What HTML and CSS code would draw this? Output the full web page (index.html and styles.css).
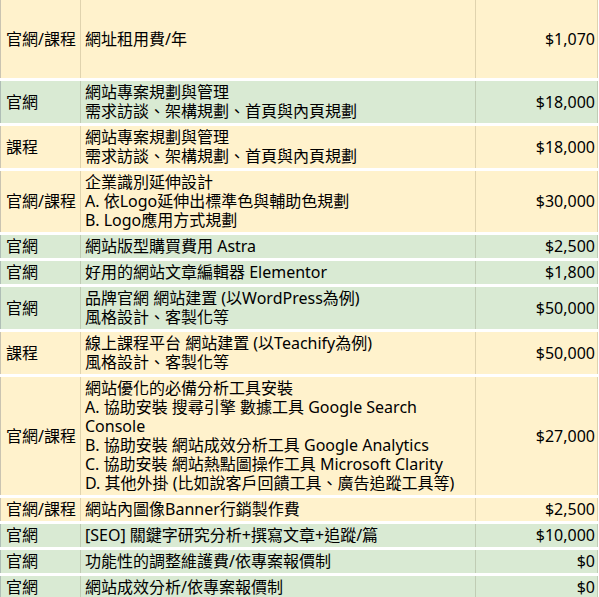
FILE: index.html
```html
<!DOCTYPE html>
<html lang="zh-Hant">
<head>
<meta charset="utf-8">
<title>報價表</title>
<link rel="stylesheet" href="styles.css">
</head>
<body>
<div class="sheet">
  <div class="row yellow tall">
    <div class="cell type">官網/課程</div>
    <div class="cell item"><p class="text">網址租用費/年</p></div>
    <div class="cell price">$1,070</div>
  </div>
  <div class="row green">
    <div class="cell type">官網</div>
    <div class="cell item"><p class="text">網站專案規劃與管理<br>需求訪談、架構規劃、首頁與內頁規劃</p></div>
    <div class="cell price">$18,000</div>
  </div>
  <div class="row yellow">
    <div class="cell type">課程</div>
    <div class="cell item"><p class="text">網站專案規劃與管理<br>需求訪談、架構規劃、首頁與內頁規劃</p></div>
    <div class="cell price">$18,000</div>
  </div>
  <div class="row yellow">
    <div class="cell type">官網/課程</div>
    <div class="cell item"><p class="text">企業識別延伸設計<br>A. 依Logo延伸出標準色與輔助色規劃<br>B. Logo應用方式規劃</p></div>
    <div class="cell price">$30,000</div>
  </div>
  <div class="row green">
    <div class="cell type">官網</div>
    <div class="cell item"><p class="text">網站版型購買費用 Astra</p></div>
    <div class="cell price">$2,500</div>
  </div>
  <div class="row green">
    <div class="cell type">官網</div>
    <div class="cell item"><p class="text">好用的網站文章編輯器 Elementor</p></div>
    <div class="cell price">$1,800</div>
  </div>
  <div class="row green">
    <div class="cell type">官網</div>
    <div class="cell item"><p class="text">品牌官網 網站建置 (以WordPress為例)<br>風格設計、客製化等</p></div>
    <div class="cell price">$50,000</div>
  </div>
  <div class="row yellow">
    <div class="cell type">課程</div>
    <div class="cell item"><p class="text">線上課程平台 網站建置 (以Teachify為例)<br>風格設計、客製化等</p></div>
    <div class="cell price">$50,000</div>
  </div>
  <div class="row yellow">
    <div class="cell type">官網/課程</div>
    <div class="cell item"><p class="text">網站優化的必備分析工具安裝<br>A. 協助安裝 搜尋引擎 數據工具 Google Search<br>Console<br>B. 協助安裝 網站成效分析工具 Google Analytics<br>C. 協助安裝 網站熱點圖操作工具 Microsoft Clarity<br>D. 其他外掛 (比如說客戶回饋工具、廣告追蹤工具等)</p></div>
    <div class="cell price">$27,000</div>
  </div>
  <div class="row yellow">
    <div class="cell type">官網/課程</div>
    <div class="cell item"><p class="text">網站內圖像Banner行銷製作費</p></div>
    <div class="cell price">$2,500</div>
  </div>
  <div class="row green">
    <div class="cell type">官網</div>
    <div class="cell item"><p class="text">[SEO] 關鍵字研究分析+撰寫文章+追蹤/篇</p></div>
    <div class="cell price">$10,000</div>
  </div>
  <div class="row green">
    <div class="cell type">官網</div>
    <div class="cell item"><p class="text">功能性的調整維護費/依專案報價制</p></div>
    <div class="cell price">$0</div>
  </div>
  <div class="row green">
    <div class="cell type">官網</div>
    <div class="cell item"><p class="text">網站成效分析/依專案報價制</p></div>
    <div class="cell price">$0</div>
  </div>
</div>
</body>
</html>
```
FILE: styles.css
```css
html, body {
  margin: 0;
  padding: 0;
  background: #ffffff;
}

body {
  font-family: "Noto Sans", "Noto Sans CJK TC", sans-serif;
  font-size: 16px;
  line-height: 19px;
  color: #000000;
}

.sheet {
  width: 598px;
  display: flex;
  flex-direction: column;
  gap: 3px;
}

.row {
  display: grid;
  grid-template-columns: 81px 395px 122px;
}

.row.tall {
  min-height: 78px;
}

.yellow {
  background: #fff2cc;
}

.green {
  background: #d9ead3;
}

.cell {
  display: flex;
  flex-direction: column;
  justify-content: center;
  padding: 2px 0;
  border-right: 1px solid rgba(60, 50, 20, 0.16);
  white-space: nowrap;
}

.type {
  border-left: 1px solid rgba(70, 80, 110, 0.28);
  padding-left: 5px;
}

.item {
  padding-left: 4px;
}

.text {
  margin: 0;
}

.price {
  text-align: right;
  padding-right: 2px;
}
```
